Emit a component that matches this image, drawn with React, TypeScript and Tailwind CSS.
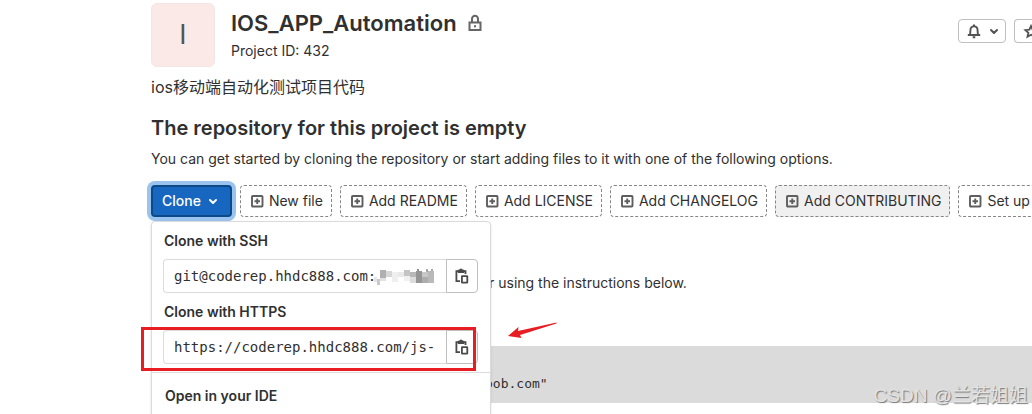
import React from "react";

const actions = [
  { label: "New file" },
  { label: "Add README" },
  { label: "Add LICENSE" },
  { label: "Add CHANGELOG" },
  { label: "Add CONTRIBUTING", active: true },
  { label: "Set up CI/CD" },
];

// Redaction blocks: x, y, width, height, fill
const mosaic: [number, number, number, number, string][] = [
  [0, 8, 3, 5, "#e6e6e6"],
  [3, 10, 3, 6, "#c9c9c9"],
  [6, 1, 6, 8, "#b0b0b0"],
  [6, 9, 6, 3, "#e2e2e2"],
  [12, 2, 6, 6, "#d6d6d6"],
  [18, 3, 6, 10, "#efefef"],
  [24, 3, 6, 5, "#e9e9e9"],
  [30, 1, 6, 6, "#c4c4c4"],
  [30, 7, 6, 5, "#f0f0f0"],
  [36, 3, 6, 5, "#b8b8b8"],
  [36, 8, 6, 6, "#dcdcdc"],
  [42, 2, 6, 12, "#959595"],
  [48, 3, 6, 5, "#c8c8c8"],
  [48, 8, 6, 6, "#adadad"],
  [54, 2, 6, 12, "#b9b9b9"],
  [43, 0, 2, 2, "#8d8d8d"],
  [52, 0, 2, 3, "#a6a6a6"],
  [57, 0, 2, 2, "#a6a6a6"],
];

function PlusSquare() {
  return (
    <svg className="size-4" viewBox="0 0 16 16" fill="none" stroke="#5e5e5e" strokeWidth="1.9" aria-hidden="true">
      <rect x="3" y="3" width="10.5" height="10.5" rx="0.8" />
      <path d="M8.250 5.500v5.500M5.500 8.250H11" />
    </svg>
  );
}

function Chevron() {
  return (
    <svg className="size-4" viewBox="0 0 16 16" fill="none" stroke="currentColor" strokeWidth="2" strokeLinecap="round" strokeLinejoin="round" aria-hidden="true">
      <path d="M5 7l3 3 3-3" />
    </svg>
  );
}

function CopyIcon() {
  return (
    <svg className="size-4" viewBox="0 0 16 16" fill="none" stroke="#4a4a4a" strokeWidth="1.8" aria-hidden="true">
      <path d="M6 13.200H2.400V3.200H4.500M9.500 3.200h2V6" />
      <path d="M4.400 4.300V2.300h1.200a1.450 1.450 0 0 1 2.800 0h1.200v2z" strokeWidth="1.3" fill="#4a4a4a" />
      <rect x="7.900" y="8.200" width="5.400" height="6.400" rx="0.400" />
    </svg>
  );
}

function CloneField({ id, label, value, children }: { id: string; label: string; value: string; children?: React.ReactNode }) {
  return (
    <div className="pr-3 pl-[11px]">
      <label htmlFor={id} className="block pl-px text-sm leading-5 font-semibold">
        {label}
      </label>
      <div className="relative mt-2 flex h-[34px]">
        <input
          id={id}
          readOnly
          value={value}
          className="min-w-0 flex-1 rounded-l border border-r-0 border-[#dbdbdb] px-2.5 font-['DejaVu_Sans_Mono',monospace] text-sm outline-none"
        />
        <button type="button" aria-label="Copy URL" className="flex w-8 items-center justify-center rounded-r border border-[#bfbfbf]">
          <CopyIcon />
        </button>
        {children}
      </div>
    </div>
  );
}

export default function App() {
  return (
    <div className="relative h-screen overflow-hidden bg-white pl-[151px] font-[Inter,'Noto_Sans_CJK_SC',sans-serif] text-sm text-[#303030]">
      <header className="flex pt-[3px]">
        <div className="flex size-16 shrink-0 items-center justify-center rounded-md border border-[#f3e6e4] bg-[#fbe9e7] text-[27px] text-[#555]">I</div>
        <div className="ml-4 pt-1">
          <div className="flex items-center gap-2">
            <h1 className="text-[22px] leading-8 font-semibold">IOS_APP_Automation</h1>
            <svg className="size-5" viewBox="0 0 20 20" fill="none" stroke="#666" strokeWidth="2" aria-label="Private">
              <path d="M4.500 9.500h11v7.500h-11z" />
              <path d="M7 9.500V6a3 3.200 0 0 1 6 0v3.500" />
              <path d="M9 13.200h2" />
            </svg>
          </div>
          <p className="leading-6">Project ID: 432</p>
        </div>
        <div className="ml-auto flex h-10 shrink-0 items-end gap-2">
          <button type="button" aria-label="Notification settings" className="flex h-6 w-12 items-center justify-end gap-1 rounded border border-[#bfbfbf] pr-[3px] text-[#525252]">
            <svg className="size-4" viewBox="0 0 16 16" fill="none" stroke="currentColor" strokeWidth="1.9" aria-hidden="true">
              <path d="M1.800 12h12.400M3.900 11.600c.5-1.300.5-2.300.5-4.200 0-2.600 1.400-4 3.600-4s3.600 1.400 3.600 4c0 1.900 0 2.900.5 4.200" />
              <path d="M7 2.500h2M6.700 14.300h2.600" />
            </svg>
            <Chevron />
          </button>
          <button type="button" aria-label="Star" className="-mr-3 flex h-6 w-[30px] items-center rounded-l border border-r-0 border-[#bfbfbf] pl-2">
            <svg className="size-4 shrink-0" viewBox="0 0 16 16" fill="none" stroke="#525252" strokeWidth="1.8" aria-hidden="true">
              <path d="M8 3l1.600 3.700 4 .4-3 2.700.9 3.900L8 11.700l-3.500 2 .9-3.900-3-2.700 4-.4z" />
            </svg>
          </button>
        </div>
      </header>

      <p className="mt-2 text-base leading-6">ios移动端自动化测试项目代码</p>

      <main>
        <h2 className="mt-[15px] text-xl leading-7 font-semibold">The repository for this project is empty</h2>
        <p className="mt-[5px] leading-6">You can get started by cloning the repository or start adding files to it with one of the following options.</p>

        <div className="mt-3.5 flex gap-2">
          <div className="relative shrink-0">
            <button type="button" aria-expanded="true" className="flex h-8 items-center gap-1 rounded border-2 border-[#0b4a87] bg-[#1767c0] px-[9px] font-medium text-white ring-4 ring-[#9ac3ed]">
              Clone
              <Chevron />
            </button>
            <section className="absolute top-9 left-0 z-10 w-[340px] rounded border border-[#dbdbdb] bg-white pt-[9px] pb-12 shadow-sm">
              <CloneField id="clone-ssh" label="Clone with SSH" value="git@coderep.hhdc888.com:">
                <svg className="pointer-events-none absolute top-[10px] left-[211px] h-4 w-[60px]" viewBox="0 0 60 16" shapeRendering="crispEdges" aria-hidden="true">
                  {mosaic.map(([x, y, w, h, fill]) => (
                    <rect key={`${x}-${y}`} x={x} y={y} width={w} height={h} fill={fill} />
                  ))}
                </svg>
              </CloneField>
              <div className="h-[9px]" />
              <CloneField id="clone-https" label="Clone with HTTPS" value="https://coderep.hhdc888.com/js-">
                <div className="pointer-events-none absolute -top-[3px] right-[2px] -left-[22px] h-11 border-3 border-[#e81c23]" />
              </CloneField>
              <h3 className="mt-2 border-t border-[#dbdbdb] px-[13px] pt-[13px] leading-5 font-semibold">Open in your IDE</h3>
            </section>
          </div>
          {actions.map((a) => (
            <button
              key={a.label}
              type="button"
              className={`flex h-8 shrink-0 items-center gap-1 rounded border border-dashed border-[#868686] px-2 whitespace-nowrap ${a.active ? "bg-[#f0f0f0]" : "bg-white"}`}
            >
              <PlusSquare />
              {a.label}
            </button>
          ))}
        </div>

        <p className="mt-[54px] pl-[338px] leading-6">r using the instructions below.</p>
        <svg className="mt-6 ml-[357px] block h-5 w-[50px]" viewBox="0 0 50 20" aria-hidden="true">
          <path d="M0 17L10.500 8l-.5 4L48.500 3.500v1L12 16l1.500 3z" fill="#e81c23" />
        </svg>
        <pre className="mt-[7px] h-[57px] bg-[#dbdbdb] pt-[26px] pl-[334px] font-['DejaVu_Sans_Mono',monospace] text-[13px] leading-6">oob.com"</pre>
      </main>
      <div className="pointer-events-none absolute right-1 bottom-1 font-['Liberation_Sans','Noto_Sans_CJK_SC',sans-serif] text-[19px] leading-7 text-[#e3e3e3] [text-shadow:1px_1px_1px_#777]">CSDN @兰若姐姐</div>
    </div>
  );
}
